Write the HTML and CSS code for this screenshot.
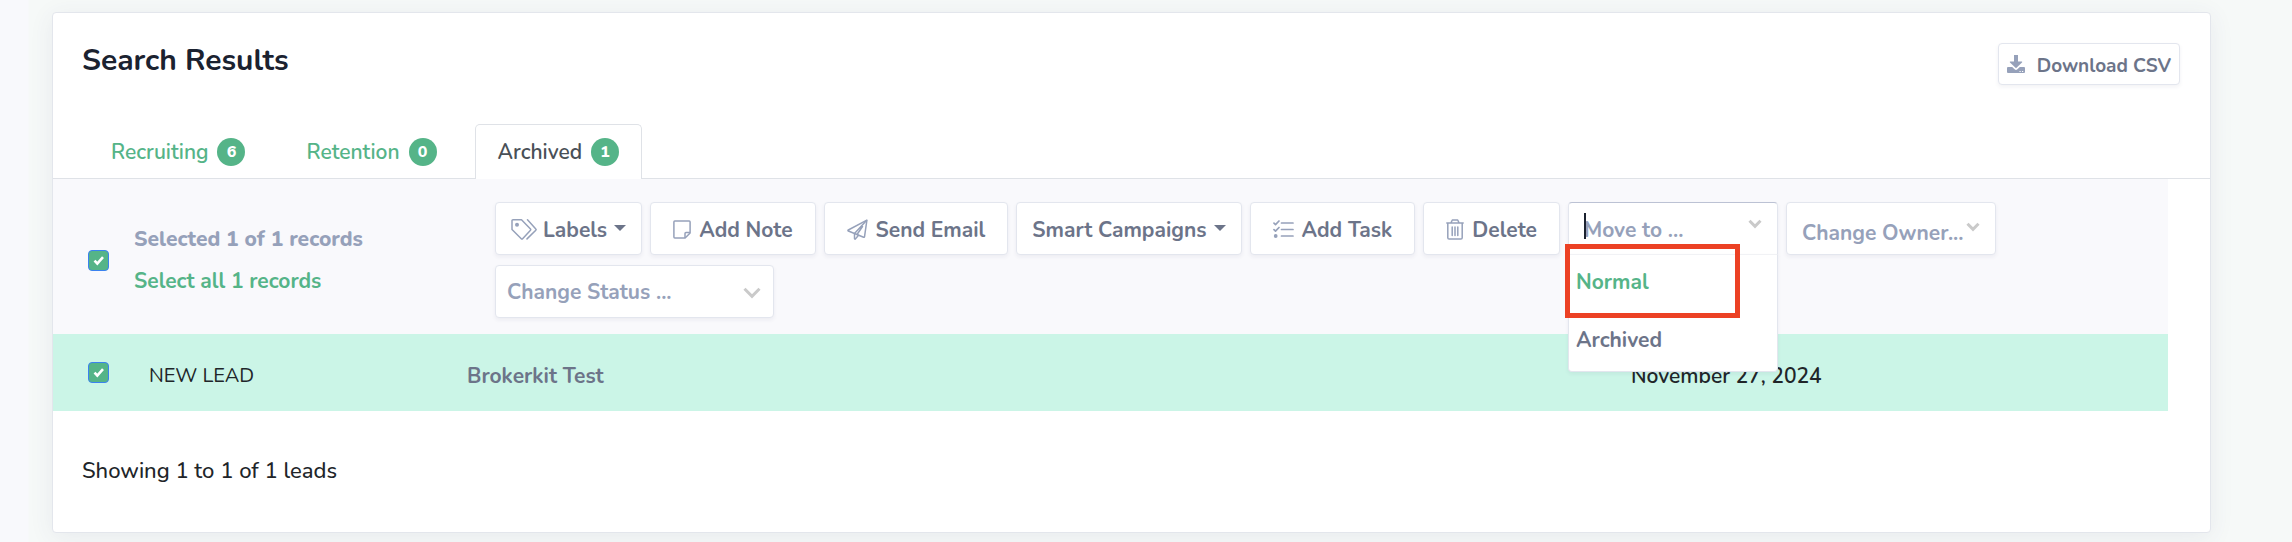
FILE: index.html
```html
<!DOCTYPE html>
<html lang="en">
<head>
<meta charset="utf-8">
<title>Search Results</title>
<link rel="stylesheet" href="styles.css">
</head>
<body>
<main class="card">
  <header class="card-header">
    <h1 class="title">Search Results</h1>
    <button class="btn btn-small" type="button">
      <svg class="icon-download" viewBox="0 0 18 18" aria-hidden="true"><path fill="currentColor" d="M7 0h4v6.500h3.600c.6 0 .8.600.4 1L9.500 12.800a.7.700 0 0 1-1 0L3 7.500c-.4-.4-.2-1 .4-1H7z"/><path fill="currentColor" fill-rule="evenodd" d="M1 12h4.200l2.400 2.200a2 2 0 0 0 2.800 0l2.400-2.200H17a1 1 0 0 1 1 1v4a1 1 0 0 1-1 1H1a1 1 0 0 1-1-1v-4a1 1 0 0 1 1-1zm11.500 3.900v1.100h1.200v-1.100zm2.500 0v1.100h1.200v-1.100z"/></svg>
      Download CSV
    </button>
  </header>

  <nav class="tabs">
    <a class="tab" href="#recruiting">Recruiting <span class="badge">6</span></a>
    <a class="tab" href="#retention">Retention <span class="badge">0</span></a>
    <a class="tab tab-active" href="#archived" aria-current="page">Archived <span class="badge">1</span></a>
  </nav>

  <table class="leads">
    <colgroup><col class="col-check"><col class="col-status"><col class="col-name"><col></colgroup>
    <thead>
      <tr>
        <th colspan="4" class="toolbar-cell">
          <div class="toolbar">
            <input class="check" type="checkbox" checked aria-label="Select all leads">
            <div class="selection">
              <span class="selected-count">Selected 1 of 1 records</span>
              <a class="select-all" href="#all">Select all 1 records</a>
            </div>
            <div class="actions">
              <button class="btn btn-menu" type="button">
                <svg class="icon-tags" viewBox="0 0 26 21" aria-hidden="true"><g fill="none" stroke="currentColor" stroke-width="1.500" stroke-linejoin="round" stroke-linecap="round"><path d="M1 1.800A1 1 0 0 1 2 .8h8.500l9 9.200c.4.500.4.900 0 1.300L11.600 19.700c-.4.500-.9.500-1.300 0L1 10.500z"/><path d="M16.500 .8l8.300 9.200c.4.400.4.800 0 1.200L16 19.900"/></g><circle cx="6" cy="5.800" r="2" fill="currentColor"/></svg>
                Labels<span class="caret"></span>
              </button>
              <button class="btn btn-icon" type="button">
                <svg class="icon-18" viewBox="0 0 18 19" aria-hidden="true"><g fill="none" stroke="currentColor" stroke-width="1.500" stroke-linejoin="round"><path d="M1.800 1h14.400a.9.900 0 0 1 .9.900V13l-5 5H1.800a.9.900 0 0 1-.9-.9V1.900A.9.900 0 0 1 1.800 1z"/><path d="M17 12.600h-4a1 1 0 0 0-1 1V18"/></g></svg>
                Add Note
              </button>
              <button class="btn btn-icon" type="button">
                <svg class="icon-21" viewBox="0 0 21 21" aria-hidden="true"><g fill="none" stroke="currentColor" stroke-width="1.500" stroke-linejoin="round" stroke-linecap="round"><path d="M19.900 1.200L17.500 17.800c-.1.500-.5.600-.9.500L7.500 14.500 1.300 12c-.5-.2-.5-.7 0-1z"/><path d="M19.500 1.500L7.500 14.500v5c0 .7.600.9 1 .4l3-3.600M10 15.500L15.500 7.500"/></g></svg>
                Send Email
              </button>
              <button class="btn btn-menu" type="button">Smart Campaigns<span class="caret"></span></button>
              <button class="btn btn-icon" type="button">
                <svg class="icon-21" viewBox="0 0 21 21" aria-hidden="true"><g fill="none" stroke="currentColor" stroke-width="1.700" stroke-linecap="round" stroke-linejoin="round"><path d="M8.500 4H20M8.500 10.500H20M8.500 17H20"/><path d="M1 4.200l1.500 1.400L6 2M1 10.700l1.500 1.400L6 8.500"/></g><circle cx="2.700" cy="17" r="1.900" fill="currentColor"/></svg>
                Add Task
              </button>
              <button class="btn btn-icon" type="button">
                <svg class="icon-18" viewBox="0 0 18 21" aria-hidden="true"><path fill="none" stroke="currentColor" stroke-width="1.500" stroke-linejoin="round" stroke-linecap="round" d="M.8 4h16.400M5 3.800L6.300 1h5.400L13 3.800M1.800 4.200v14.600c0 .8.500 1.300 1.300 1.300h11.800c.8 0 1.300-.5 1.300-1.300V4.200M6.200 8v8.500M9 8v8.500M11.800 8v8.500"/></svg>
                Delete
              </button>
              <div class="move">
                <input class="move-input" type="text" role="combobox" aria-expanded="true" aria-controls="move-list" aria-label="Move to" placeholder="Move to ...">
                <span class="text-cursor"></span>
                <svg class="chevron" viewBox="0 0 14 10" aria-hidden="true"><path d="M1.500 1.800L7 7.300l5.500-5.500"/></svg>
                <ul class="move-list" id="move-list" role="listbox">
                  <li class="option option-current" role="option" aria-selected="true">Normal</li>
                  <li class="option" role="option" aria-selected="false">Archived</li>
                </ul>
                <span class="highlight"></span>
              </div>
              <div class="picker picker-owner">
                <select class="select" aria-label="Change owner"><option>Change Owner...</option></select>
                <svg class="chevron" viewBox="0 0 14 10" aria-hidden="true"><path d="M1.500 1.800L7 7.300l5.500-5.500"/></svg>
              </div>
              <div class="picker picker-status">
                <select class="select" aria-label="Change status"><option>Change Status ...</option></select>
                <svg class="chevron" viewBox="0 0 18 12" aria-hidden="true"><path d="M1.500 1.800L9 9.300l7.500-7.500"/></svg>
              </div>
            </div>
          </div>
        </th>
      </tr>
    </thead>
    <tbody>
      <tr class="lead">
        <td class="lead-check"><input class="check" type="checkbox" checked aria-label="Select Brokerkit Test"></td>
        <td class="lead-status">NEW LEAD</td>
        <td><a class="lead-name" href="#lead">Brokerkit Test</a></td>
        <td>November 27, 2024</td>
      </tr>
    </tbody>
  </table>

  <p class="summary">Showing 1 to 1 of 1 leads</p>
</main>
</body>
</html>
```
FILE: styles.css
```css
* { box-sizing: border-box; }

body {
  margin: 0;
  padding: 12px 81px 11px 52px;
  background: linear-gradient(90deg, #f8f9fc 28px, #f6f9f8 29px);
  color: #212529;
  font: 600 21px/30px Nunito, Lato, sans-serif;
}

a { color: inherit; text-decoration: none; }

button, input, select { font: inherit; color: inherit; }

.card {
  background: #fff;
  border: 1px solid #e3e6ec;
  border-radius: 4px;
  box-shadow: 0 4px 24px rgba(58, 70, 110, 0.08);
}

.card-header {
  display: flex;
  justify-content: space-between;
  align-items: flex-start;
  padding: 30px 30px 0 29px;
}

.title {
  margin: 0;
  font-size: 30px;
  line-height: 36px;
  font-weight: 700;
  color: #1b2230;
}

.btn {
  display: flex;
  align-items: center;
  height: 53px;
  background: #fff;
  border: 1px solid #e3e6ee;
  border-radius: 4px;
  box-shadow: 0 2px 4px rgba(30, 40, 90, 0.06);
  color: #6c7489;
  font-weight: 700;
  white-space: nowrap;
  cursor: pointer;
}

.btn svg { color: #96a1ba; flex: none; }

.btn-small {
  height: 42px;
  padding: 4px 8px 0;
  gap: 12px;
  font-size: 19px;
}

.icon-download { width: 18px; height: 18px; margin-bottom: 4px; }
.icon-tags { width: 26px; height: 21px; }
.icon-18 { width: 18px; height: 21px; }
.icon-21 { width: 21px; height: 21px; }

.btn-icon { padding: 2px 22px 0; gap: 8px; }
.btn-menu { padding: 2px 15px 0; gap: 6px; }

.caret {
  margin: 0 0 4px 1px;
  border: 6px solid transparent;
  border-top-color: currentColor;
  border-bottom: 0;
}

.tabs {
  display: flex;
  gap: 15px;
  padding: 39px 35px 0;
  border-bottom: 1px solid #dfe2e7;
}

.tab {
  display: flex;
  align-items: center;
  gap: 9px;
  height: 55px;
  margin-bottom: -1px;
  padding: 0 22px;
  border: 1px solid transparent;
  border-bottom: 0;
  border-radius: 5px 5px 0 0;
  color: #55b488;
}

.tab-active {
  background: #fff;
  border-color: #dfe2e7;
  color: #495057;
}

.badge {
  width: 28px;
  height: 28px;
  border-radius: 50%;
  background: #55b488;
  color: #fff;
  font-size: 16px;
  line-height: 29px;
  font-weight: 800;
  text-align: center;
}

.leads {
  width: calc(100% - 42px);
  border-collapse: collapse;
  table-layout: fixed;
}

.col-check { width: 96px; }
.col-status { width: 318px; }
.col-name { width: 1164px; }

.toolbar-cell {
  padding: 23px 35px 16px;
  background: #f9f9fc;
  text-align: left;
  font-weight: 700;
}

.toolbar {
  display: flex;
  align-items: center;
}

.check {
  appearance: none;
  flex: none;
  width: 21px;
  height: 21px;
  margin: 0;
  border: 1px solid #3b82f0;
  border-radius: 4px;
  background: #55b488 url("data:image/svg+xml,%3Csvg xmlns='http://www.w3.org/2000/svg' viewBox='0 0 12 10'%3E%3Cpath d='M1.500 5.200l2.800 2.800 5.700-6.300' fill='none' stroke='%23fff' stroke-width='2.600'/%3E%3C/svg%3E") center / 12px 11px no-repeat;
}

.selection {
  display: flex;
  flex: none;
  flex-direction: column;
  gap: 12px;
  width: 386px;
  padding-left: 25px;
}

.selected-count {
  color: #96a1ba;
  font-weight: 800;
}

.select-all { color: #55b488; }

.actions {
  flex: 1;
  display: flex;
  flex-wrap: wrap;
  gap: 10px 8px;
}

.move,
.picker {
  position: relative;
  width: 210px;
  height: 53px;
}

.picker-status { width: 279px; }

.move-input,
.select {
  appearance: none;
  width: 100%;
  height: 100%;
  background: #fff;
  border: 1px solid #e3e6ee;
  border-radius: 4px;
  box-shadow: 0 2px 4px rgba(30, 40, 90, 0.06);
  color: #96a1ba;
  font-weight: 700;
}

.select { padding: 0 11px; }

.picker-owner .select { padding: 8px 15px 0; }

.move-input {
  padding: 2px 15px 0;
  border-top-color: #bcc2d4;
  border-bottom-color: #f1f2f5;
  border-radius: 4px 4px 0 0;
}

.move-input::placeholder { color: #96a1ba; opacity: 1; }

.text-cursor {
  position: absolute;
  top: 11px;
  left: 16px;
  width: 2px;
  height: 26px;
  background: #1b2230;
}

.chevron {
  position: absolute;
  top: 17px;
  right: 16px;
  width: 14px;
  height: 10px;
  fill: none;
  stroke: #cacaca;
  stroke-width: 3;
}

.picker-owner .chevron { top: 20px; }

.picker-status .chevron {
  top: 22px;
  right: 13px;
  width: 18px;
  height: 12px;
}

.move-list {
  position: absolute;
  z-index: 1;
  top: 52px;
  left: 0;
  width: 100%;
  margin: 0;
  padding: 0 7px;
  list-style: none;
  background: #fff;
  border: 1px solid #e3e6ee;
  border-top-color: #f1f2f5;
  border-radius: 0 0 4px 4px;
  box-shadow: 0 2px 4px rgba(30, 40, 90, 0.06);
}

.option {
  height: 58px;
  line-height: 55px;
  color: #6c7489;
}

.option-current { color: #55b488; }

.highlight {
  position: absolute;
  z-index: 2;
  top: 42px;
  left: -3px;
  width: 175px;
  height: 74px;
  border: 5px solid #ec4124;
}

.lead { background: #cbf5e7; }

.lead td {
  height: 77px;
  padding: 6px 0 0;
  vertical-align: middle;
}

.lead .lead-check { padding: 0 0 0 35px; }

.lead-check .check { display: block; }

.lead-status {
  font-size: 20px;
  font-weight: 400;
}

.lead-name {
  color: #6c7489;
  font-weight: 700;
}

.summary {
  margin: 0;
  padding: 45px 29px 46px;
  font-size: 22px;
  font-weight: 500;
}
```
